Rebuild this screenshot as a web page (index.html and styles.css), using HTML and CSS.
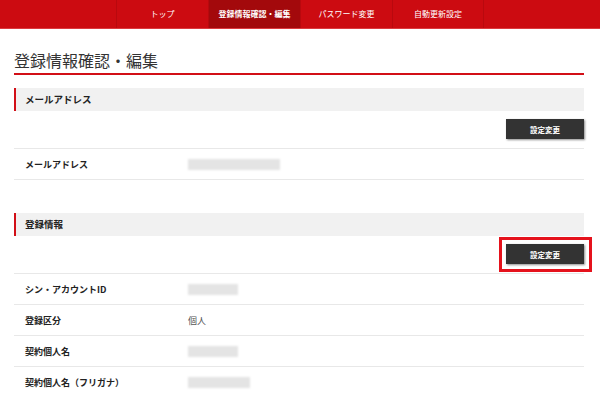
FILE: index.html
```html
<!DOCTYPE html>
<html lang="ja">
<head>
<meta charset="utf-8">
<title>登録情報確認・編集</title>
<link rel="stylesheet" href="styles.css">
</head>
<body>
<nav class="gnav">
  <ul class="gnav-list">
    <li class="gnav-item"><a href="#">トップ</a></li>
    <li class="gnav-item is-active"><a href="#">登録情報確認・編集</a></li>
    <li class="gnav-item"><a href="#">パスワード変更</a></li>
    <li class="gnav-item"><a href="#">自動更新設定</a></li>
  </ul>
</nav>
<main class="page">
  <h1 class="page-title">登録情報確認・編集</h1>

  <section class="block">
    <h2 class="block-head">メールアドレス</h2>
    <div class="block-actions"><button class="btn">設定変更</button></div>
    <dl class="rows">
      <div class="row"><dt>メールアドレス</dt><dd><span class="masked masked-xl"></span></dd></div>
    </dl>
  </section>

  <section class="block block-second">
    <h2 class="block-head">登録情報</h2>
    <div class="block-actions">
      <span class="highlight-wrap"><button class="btn">設定変更</button><span class="highlight"></span></span>
    </div>
    <dl class="rows">
      <div class="row"><dt>シン・アカウントID</dt><dd><span class="masked masked-s"></span></dd></div>
      <div class="row"><dt>登録区分</dt><dd>個人</dd></div>
      <div class="row"><dt>契約個人名</dt><dd><span class="masked masked-s"></span></dd></div>
      <div class="row"><dt>契約個人名（フリガナ）</dt><dd><span class="masked masked-m"></span></dd></div>
    </dl>
  </section>
</main>
</body>
</html>
```
FILE: styles.css
```css
* { box-sizing: border-box; }
html, body { margin: 0; padding: 0; background: #fff; }
body {
  font-family: "Noto Sans CJK JP", "Liberation Sans", sans-serif;
  color: #333;
  overflow: hidden;
}

.gnav {
  background: #cc0b11;
  height: 29px;
  border-bottom: 1px solid #dc3a3f;
}
.gnav-list {
  list-style: none;
  margin: 0;
  padding: 0;
  display: flex;
  justify-content: center;
  height: 28px;
}
.gnav-item {
  width: 92px;
  border-left: 1px solid #b9090e;
  display: flex;
  align-items: center;
  justify-content: center;
}
.gnav-item:last-child { border-right: 1px solid #b9090e; }
.gnav-item a {
  color: #fff;
  text-decoration: none;
  font-size: 8px;
  line-height: 1;
}
.gnav-item.is-active { background: #a3090c; }
.gnav-item.is-active a { font-weight: bold; }

.page {
  width: 570px;
  margin: 0 0 0 14px;
}
.page-title {
  margin: 21px 0 0;
  font-size: 16px;
  font-weight: normal;
  line-height: 20px;
  padding-bottom: 3px;
  border-bottom: 2px solid #d20f17;
  color: #333;
  letter-spacing: 0;
}

.block { margin-top: 13px; }
.block-second { margin-top: 33px; }
.block-head {
  margin: 0;
  height: 23px;
  line-height: 23px;
  background: #f1f1f1;
  border-left: 2px solid #d20f17;
  padding-left: 9px;
  font-size: 9.5px;
  font-weight: bold;
  color: #222;
}
.block-actions {
  display: flex;
  justify-content: flex-end;
  padding: 8px 0 9px;
  border-bottom: 1px solid #e8e8e8;
}
.btn {
  width: 78px;
  height: 20px;
  border: none;
  background: #333;
  color: #fff;
  font-family: inherit;
  font-size: 7.5px;
  font-weight: bold;
  padding: 0;
  box-shadow: 1px 1px 2px rgba(0,0,0,0.45);
  display: block;
}
.highlight-wrap { position: relative; display: block; }
.highlight {
  position: absolute;
  top: -7px;
  left: -7px;
  right: -8px;
  bottom: -8px;
  border: 3px solid #e5121c;
  pointer-events: none;
}

.rows { margin: 0; }
.row {
  display: flex;
  align-items: center;
  height: 31px;
  border-bottom: 1px solid #e8e8e8;
}
.row dt {
  width: 174px;
  padding-left: 11px;
  font-size: 9px;
  font-weight: bold;
  color: #222;
}
.row dd {
  margin: 0;
  font-size: 9px;
  color: #555;
  display: flex;
  align-items: center;
}
.masked {
  display: block;
  height: 11px;
  background: #e4e4e4;
  filter: blur(0.8px);
}
.masked-xl { width: 92px; }
.masked-s { width: 50px; }
.masked-m { width: 62px; }
```
